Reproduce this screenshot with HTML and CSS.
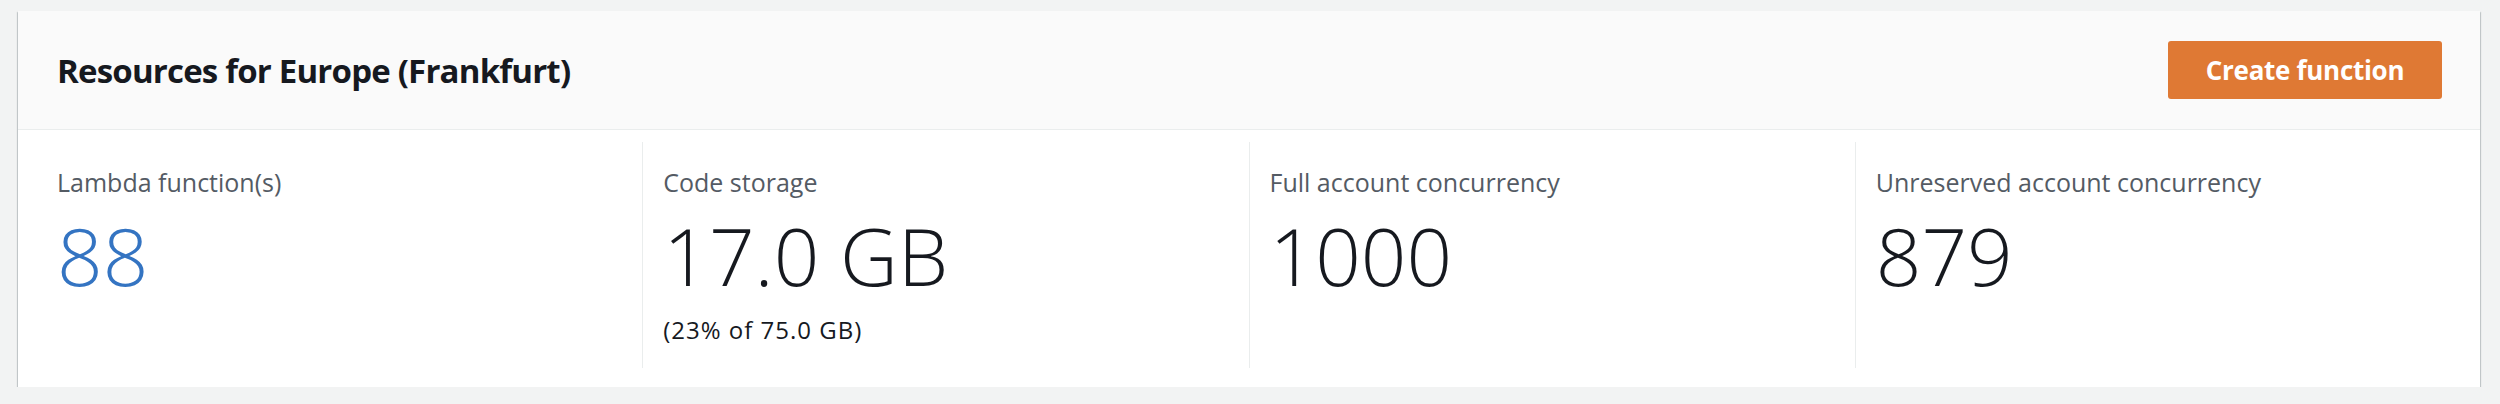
FILE: index.html
```html
<!DOCTYPE html>
<html lang="en">
<head>
<meta charset="utf-8">
<title>Resources for Europe (Frankfurt)</title>
<link rel="stylesheet" href="styles.css">
</head>
<body>
<div class="page">
  <section class="card">
    <header class="card-header">
      <h2 class="card-title">Resources for Europe (Frankfurt)</h2>
      <button class="btn-primary" type="button">Create function</button>
    </header>
    <div class="card-body">
      <div class="stat">
        <div class="stat-label">Lambda function(s)</div>
        <a class="stat-value stat-link" href="#">88</a>
      </div>
      <div class="stat">
        <div class="stat-label">Code storage</div>
        <div class="stat-value">17.0 GB</div>
        <div class="stat-sub">(23% of 75.0 GB)</div>
      </div>
      <div class="stat">
        <div class="stat-label">Full account concurrency</div>
        <div class="stat-value">1000</div>
      </div>
      <div class="stat">
        <div class="stat-label">Unreserved account concurrency</div>
        <div class="stat-value">879</div>
      </div>
    </div>
  </section>
</div>
</body>
</html>
```
FILE: styles.css
```css
html, body {
  margin: 0;
  padding: 0;
  background: #f2f3f3;
}

body {
  font-family: "Open Sans", "Noto Sans", "Liberation Sans", sans-serif;
  color: #16191f;
}

.page {
  padding: 11px 20px 0 18px;
}

.card {
  background: #ffffff;
  box-shadow: 0 2px 1px 0 rgba(0, 28, 36, 0.35), 1px 1px 1px 0 rgba(0, 28, 36, 0.15), -1px 1px 1px 0 rgba(0, 28, 36, 0.15);
}

.card-header {
  height: 118px;
  background: #fafafa;
  border-bottom: 1px solid #eaeded;
  display: flex;
  align-items: center;
  justify-content: space-between;
  padding: 0 38px 0 39px;
}

.card-title {
  margin: 0;
  font-size: 33px;
  font-weight: 700;
  color: #16191f;
  letter-spacing: -0.8px;
}

.btn-primary {
  width: 274px;
  height: 58px;
  border: none;
  border-radius: 3px;
  background: #df7934;
  color: #ffffff;
  font-family: inherit;
  font-size: 26px;
  font-weight: 700;
  letter-spacing: -0.3px;
  padding: 0;
  cursor: pointer;
}

.card-body {
  display: grid;
  grid-template-columns: repeat(4, 1fr);
  padding: 12px 19px 19px 18px;
}

.stat {
  border-left: 1px solid #eaeded;
  padding: 22px 20px 0 20px;
  height: 204px;
  display: flex;
  flex-direction: column;
  align-items: flex-start;
}

.stat:first-child {
  border-left-color: transparent;
}

.stat-label {
  font-size: 25px;
  line-height: 36px;
  color: #545b64;
}

.stat-value {
  font-size: 80px;
  font-weight: 300;
  line-height: 80px;
  color: #16191f;
  margin-top: 15px;
}

.stat-link {
  color: #3474c2;
  text-decoration: none;
}

.stat-sub {
  font-size: 24px;
  line-height: 32px;
  letter-spacing: 1px;
  color: #16191f;
  margin-top: 19px;
}
```
